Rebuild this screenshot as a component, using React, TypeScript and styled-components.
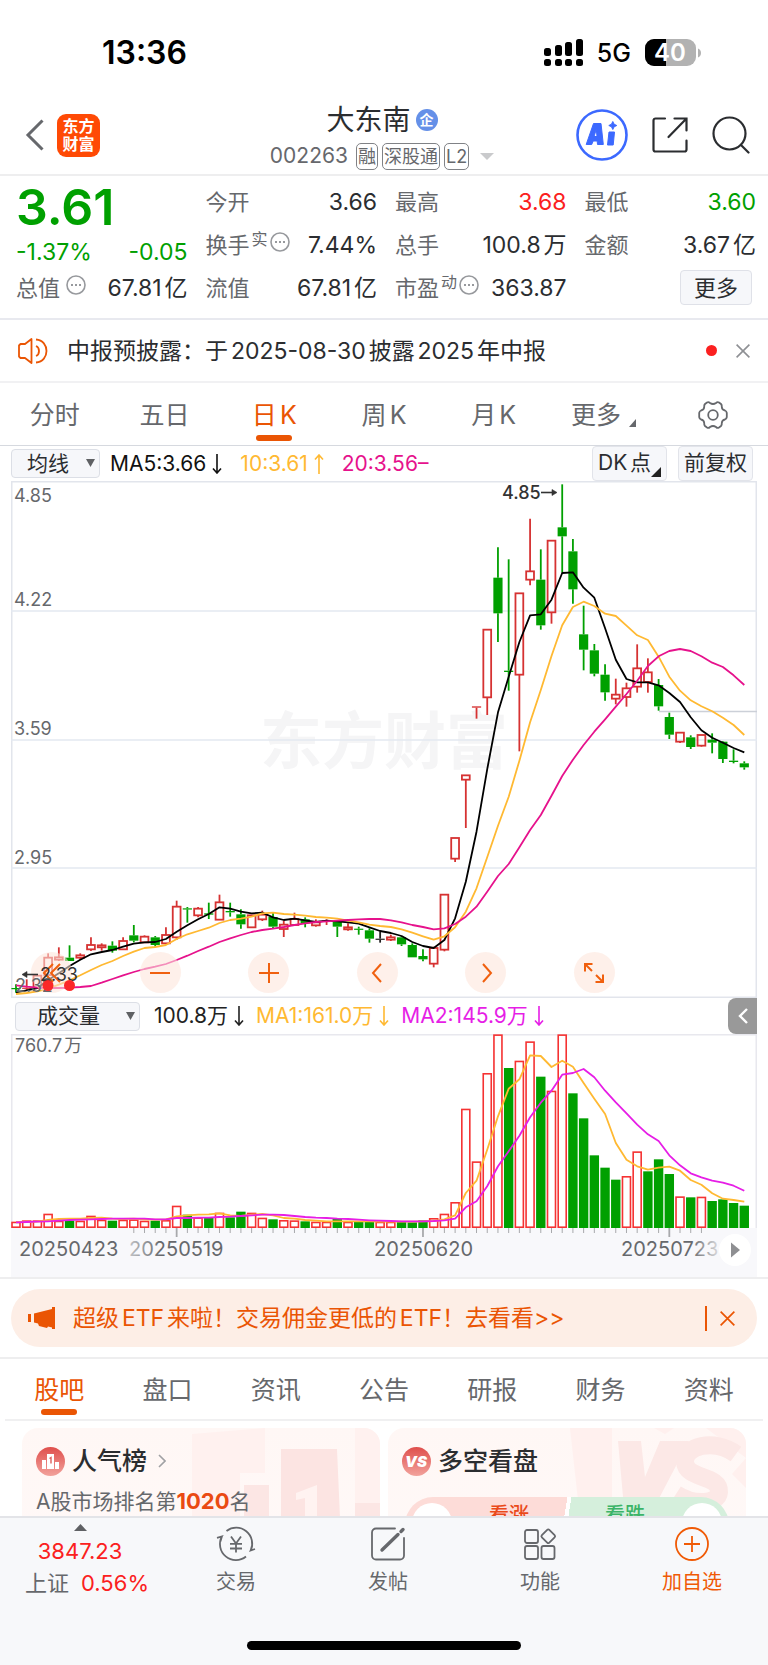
import React from "react";
import styled, { createGlobalStyle } from "styled-components";

const color = {
  text: "#2b2d30",
  label: "#66686c",
  orange: "#ea5504",
  gold: "#ffb932",
  pink: "#e6128c",
  violet: "#e61ee6",
  green: "#00a000",
  red: "#fb2020",
  candle: "#d63232",
  line: "#e4e6ec",
  panel: "#f6f7fa",
};

const GlobalStyle = createGlobalStyle`
  * { box-sizing: border-box; }
  body {
    margin: 0;
    background: #fff;
    color: ${color.text};
    font-family: Inter, "Noto Sans CJK SC", sans-serif;
    text-autospace: normal;
  }
  button, select {
    font: inherit;
    color: inherit;
    border: 0;
    padding: 0;
    margin: 0;
    background: none;
    cursor: pointer;
  }
  a { color: inherit; text-decoration: none; }
  svg { display: block; }
  svg text { font-family: Inter, "Noto Sans CJK SC", sans-serif; }
`;

const Page = styled.div`
  display: flex;
  flex-direction: column;
  height: 100vh;
  overflow: hidden;
`;

/* ---------- status bar ---------- */

const StatusBar = styled.div`
  display: flex;
  align-items: center;
  justify-content: space-between;
  flex: none;
  height: 96px;
  padding: 9px 66px 0 102px;
`;

const Clock = styled.time`
  font-size: 32px;
  font-weight: 600;
  line-height: 40px;
  color: #000;
`;

const StatusIcons = styled.div`
  display: flex;
  align-items: center;
  gap: 14px;
  color: #000;
  font-size: 25px;
  font-weight: 500;
  line-height: 28px;
`;

/* ---------- header ---------- */

const Header = styled.header`
  display: grid;
  grid-template-columns: 1fr auto 1fr;
  align-items: center;
  flex: none;
  height: 80px;
  padding: 0 18px 0 14px;
  border-bottom: 2px solid #eeeeef;
`;

const HeaderSide = styled.div<{ $end?: boolean }>`
  display: flex;
  align-items: center;
  justify-content: ${(p) => (p.$end ? "flex-end" : "flex-start")};
  gap: ${(p) => (p.$end ? 24 : 12)}px;
  padding-left: ${(p) => (p.$end ? 0 : 10)}px;
`;

const IconButton = styled.button`
  display: flex;
  align-items: center;
  justify-content: center;
`;

const BrandLink = styled.a`
  display: flex;
  flex-direction: column;
  align-items: center;
  justify-content: center;
  width: 43px;
  height: 43px;
  border-radius: 9px;
  background: #ff4a05;
  color: #fff;
  font-size: 16px;
  font-weight: 700;
  line-height: 18px;
`;

const TitleBlock = styled.div`
  display: flex;
  flex-direction: column;
  align-items: center;
  padding-top: 6px;
`;

const StockName = styled.h1`
  display: flex;
  align-items: center;
  gap: 5px;
  margin: 0;
  font-size: 28px;
  font-weight: 400;
  line-height: 36px;
`;

const CompanyBadge = styled.span`
  width: 22px;
  height: 22px;
  border-radius: 50%;
  background: #6590e8;
  color: #fff;
  font-size: 14px;
  font-weight: 700;
  line-height: 22px;
  text-align: center;
`;

const CodeRow = styled.div`
  display: flex;
  align-items: center;
  gap: 4px;
  color: ${color.label};
  font-size: 21px;
  line-height: 36px;
`;

const Code = styled.span`
  margin-right: 4px;
`;

const Tag = styled.span`
  height: 27px;
  padding: 0 1px;
  border: 1px solid #808286;
  border-radius: 5px;
  font-size: 18px;
  line-height: 25px;
`;

const CodeMenu = styled.button`
  display: flex;
  padding-left: 7px;
`;

/* ---------- quote ---------- */

const Quote = styled.section`
  display: grid;
  grid-template-columns: repeat(4, 1fr);
  gap: 0 18px;
  flex: none;
  height: 144px;
  padding: 4px 12px 8px 16px;
  border-bottom: 2px solid #e8e9ef;
`;

const QuoteColumn = styled.div`
  display: flex;
  flex-direction: column;
`;

const QuoteRow = styled.div<{ $tone?: string }>`
  display: flex;
  align-items: center;
  justify-content: space-between;
  height: 43px;
  font-size: 23px;
  line-height: 30px;
  color: ${(p) => p.$tone ?? color.text};
  white-space: nowrap;
`;

const Price = styled.strong`
  height: 58px;
  font-size: 50px;
  font-weight: 600;
  line-height: 54px;
  color: ${color.green};
`;

const Change = styled(QuoteRow)`
  height: 28px;
`;

const QuoteLabel = styled.span`
  display: flex;
  align-items: center;
  color: ${color.label};
  font-size: 22px;
`;

const QuoteSup = styled.small`
  align-self: flex-start;
  margin-left: 2px;
  font-size: 16px;
  line-height: 18px;
`;

const HintButton = styled.button<{ $gap?: boolean }>`
  display: flex;
  align-self: flex-start;
  margin: 2px 0 0 ${(p) => (p.$gap ? 6 : 2)}px;
`;

const MoreButton = styled.button`
  width: 72px;
  height: 35px;
  margin: 0 4px 0 auto;
  border: 1px solid #dfe1e8;
  border-radius: 4px;
  background: ${color.panel};
  font-size: 22px;
`;

/* ---------- notice ---------- */

const Notice = styled.section`
  display: flex;
  align-items: center;
  flex: none;
  height: 63px;
  padding: 0 18px;
  border-bottom: 2px solid #f1f1f3;
  font-size: 23px;
  line-height: 32px;
`;

const NoticeText = styled.a`
  flex: 1;
  padding-left: 19px;
`;

const UnreadDot = styled.i`
  width: 11px;
  height: 11px;
  margin-right: 19px;
  border-radius: 50%;
  background: ${color.red};
`;

/* ---------- tabs ---------- */

const TabBar = styled.nav<{ $inset?: boolean }>`
  display: grid;
  grid-template-columns: repeat(7, 1fr);
  flex: none;
  height: ${(p) => (p.$inset ? 62 : 63)}px;
  margin: ${(p) => (p.$inset ? "0 5px" : "0")};
  border-bottom: ${(p) => (p.$inset ? "2px solid #f0f0f1" : "1px solid #d6d9df")};
`;

const Tab = styled.button<{ $active?: boolean }>`
  display: flex;
  align-items: center;
  justify-content: center;
  gap: 8px;
  position: relative;
  padding-top: 2px;
  font-size: 25px;
  line-height: 36px;
  color: ${(p) => (p.$active ? color.orange : color.label)};
  &::after {
    content: "";
    display: ${(p) => (p.$active ? "block" : "none")};
    position: absolute;
    bottom: 4px;
    left: 50%;
    width: 36px;
    height: 6px;
    margin-left: -18px;
    border-radius: 3px;
    background: ${color.orange};
  }
`;

const TabCorner = styled.svg`
  align-self: flex-end;
  margin-bottom: 18px;
`;

/* ---------- chart ---------- */

const ChartSection = styled.section`
  flex: none;
  padding: 0 11px;
`;

const IndicatorRow = styled.div<{ $volume?: boolean }>`
  display: flex;
  align-items: center;
  gap: ${(p) => (p.$volume ? 12 : 18)}px;
  height: ${(p) => (p.$volume ? 36 : 35)}px;
  padding-left: ${(p) => (p.$volume ? 4 : 0)}px;
  font-size: 21px;
  line-height: 30px;
  white-space: nowrap;
  text-autospace: ${(p) => (p.$volume ? "no-autospace" : "normal")};
`;

const PickerBox = styled.label<{ $wide?: boolean }>`
  position: relative;
  display: flex;
  align-items: center;
  margin-right: ${(p) => (p.$wide ? 2 : -8)}px;
`;

const Picker = styled.select<{ $wide?: boolean }>`
  appearance: none;
  width: ${(p) => (p.$wide ? 125 : 89)}px;
  height: 29px;
  padding-left: ${(p) => (p.$wide ? 21 : 15)}px;
  border: 1px solid #dcdfe6;
  border-radius: 4px;
  background: ${color.panel};
  line-height: 26px;
`;

const PickerArrow = styled.svg`
  position: absolute;
  right: 5px;
  top: 10px;
  pointer-events: none;
`;

const Reading = styled.span<{ $tone: string }>`
  display: flex;
  align-items: center;
  gap: 6px;
  color: ${(p) => p.$tone};
`;

const ToolButtons = styled.div`
  display: flex;
  gap: 11px;
  margin: 0 4px 0 auto;
`;

const ToolButton = styled.button`
  position: relative;
  width: 75px;
  height: 35px;
  border: 1px solid #e2e4ea;
  border-radius: 4px;
  background: ${color.panel};
  text-align: left;
  padding: 0 0 2px 5px;
`;

const ToolCorner = styled.svg`
  position: absolute;
  right: 5px;
  bottom: 3px;
`;

const CollapseButton = styled.button`
  display: flex;
  align-items: center;
  justify-content: center;
  width: 29px;
  height: 36px;
  margin-left: auto;
  border-radius: 8px 0 0 8px;
  background: #999;
`;

const PlotBox = styled.div`
  position: relative;
`;

const Plot = styled.svg`
  width: 100%;
  height: auto;
`;

const PlotOverlay = styled(Plot)`
  position: absolute;
  inset: 0;
  pointer-events: none;
`;

const PlotControls = styled.div`
  position: absolute;
  left: 20px;
  right: 142px;
  bottom: 5px;
  display: flex;
  justify-content: space-between;
`;

const RoundButton = styled.button`
  display: flex;
  align-items: center;
  justify-content: center;
  width: 41px;
  height: 41px;
  border-radius: 50%;
  background: rgba(253, 230, 219, 0.58);
`;

/* ---------- banner ---------- */

const BannerWrap = styled.section`
  flex: none;
  padding: 10px 11px;
  border-top: 2px solid #eeeeef;
  border-bottom: 2px solid #eeeeef;
`;

const Banner = styled.div`
  display: flex;
  align-items: center;
  height: 58px;
  padding: 0 22px 0 17px;
  border-radius: 29px;
  background: #fdeee6;
  color: ${color.orange};
  font-size: 23px;
  line-height: 32px;
`;

const BannerText = styled.a`
  flex: 1;
  padding-left: 17px;
`;

const BannerClose = styled.button`
  display: flex;
  padding: 5px 0 5px 13px;
  border-left: 2px solid ${color.orange};
`;

/* ---------- cards ---------- */

const Cards = styled.section`
  display: grid;
  grid-template-columns: 1fr 1fr;
  grid-auto-rows: 150px;
  gap: 8px;
  flex: 1;
  min-height: 0;
  overflow: hidden;
  padding: 7px 22px 0;
`;

const Card = styled.article`
  position: relative;
  overflow: hidden;
  padding: 17px 14px;
  border-radius: 16px;
  background: linear-gradient(180deg, #fff7f5, #fff9f8);
`;

const CardArt = styled.svg`
  position: absolute;
  top: 0;
  right: 0;
`;

const CardTitle = styled.h2`
  display: flex;
  align-items: center;
  gap: 7px;
  position: relative;
  margin: 0;
  font-size: 25px;
  font-weight: 500;
  line-height: 32px;
`;

const CardText = styled.p`
  position: relative;
  margin: 8px 0 0;
  color: ${color.label};
  font-size: 21px;
  line-height: 32px;
  text-autospace: no-autospace;
`;

const Rank = styled.b`
  color: #ea4a12;
  font-size: 22px;
  font-weight: 700;
`;

const Poll = styled.div`
  position: relative;
  display: grid;
  grid-template-columns: 1fr 1fr;
  gap: 4px;
  height: 56px;
  margin: 20px 3px 0;
  border-radius: 28px;
  overflow: hidden;
  background: linear-gradient(
    99deg,
    #fddcd8 calc(50% - 4px),
    #fff calc(50% - 4px),
    #fff 50%,
    #d5efdc 50%
  );
`;

const PollSide = styled.button<{ $bull?: boolean }>`
  display: flex;
  align-items: flex-start;
  flex-direction: ${(p) => (p.$bull ? "row" : "row-reverse")};
  justify-content: flex-start;
  gap: 37px;
  padding: 6px 7px;
  color: ${(p) => (p.$bull ? "#ea4a1a" : "#3cb468")};
  font-size: 20px;
  font-weight: 500;
  line-height: 24px;
`;

const PollKnob = styled.i`
  width: 40px;
  height: 40px;
  border-radius: 50%;
  background: #fff;
`;

/* ---------- bottom bar ---------- */

const BottomBar = styled.footer`
  flex: none;
  height: 149px;
  border-top: 2px solid #e3e4e8;
  background: #f7f8fa;
`;

const BottomNav = styled.nav`
  display: grid;
  grid-template-columns: 160fr repeat(4, 152fr);
`;

const IndexButton = styled.button`
  display: flex;
  flex-direction: column;
  align-items: center;
  padding-top: 6px;
  color: ${color.red};
  font-size: 22px;
  line-height: 32px;
`;

const IndexValue = styled.span`
  margin-top: 4px;
`;

const IndexLine = styled.span`
  display: flex;
  gap: 12px;
  padding-left: 14px;
`;

const IndexName = styled.span`
  color: ${color.label};
`;

const NavItem = styled.button<{ $accent?: boolean }>`
  display: flex;
  flex-direction: column;
  align-items: center;
  gap: 6px;
  padding-top: 8px;
  color: ${(p) => (p.$accent ? "#f05a05" : color.label)};
  font-size: 20px;
  line-height: 28px;
`;

const HomeIndicator = styled.div`
  width: 274px;
  height: 9px;
  margin: 42px auto 0;
  border-radius: 5px;
  background: #000;
`;

/* ---------- chart data ---------- */

type Kind = "r" | "g" | "k";
type Candle = [Kind, number, number, number, number];

const STEP = 10.71;
const FIRST = 5;
const cx = (i: number) => FIRST + i * STEP;

// Values are stored in thirds of a chart unit, measured from a base level.
const level = (base: number, values: number[]) => values.map((v) => (v + base) / 3);
const candlesAt = (base: number, rows: Candle[]): Candle[] =>
  rows.map(([k, h, t, b, l]) => [k, (h + base) / 3, (t + base) / 3, (b + base) / 3, (l + base) / 3]);

const candles: Candle[] = [
  ...candlesAt(1137, [
    ["g", 373, 384, 387, 398], ["r", 358, 383, 386, 390], ["r", 345, 347, 383, 385], ["r", 280, 293, 345, 372],
    ["r", 262, 292, 299, 303], ["g", 256, 293, 303, 303], ["r", 280, 286, 293, 300], ["r", 232, 255, 268, 273],
    ["r", 250, 256, 262, 272], ["g", 244, 257, 272, 278], ["r", 232, 243, 268, 268], ["g", 195, 226, 242, 247],
    ["r", 226, 230, 247, 247], ["g", 228, 232, 255, 260], ["r", 202, 225, 250, 250], ["r", 122, 140, 232, 240],
    ["g", 141, 145, 148, 188], ["r", 141, 146, 166, 172], ["g", 128, 160, 164, 177], ["r", 104, 127, 179, 180],
    ["g", 128, 153, 157, 170], ["g", 148, 163, 193, 206], ["r", 165, 166, 202, 202], ["r", 152, 164, 178, 183],
    ["g", 158, 171, 200, 205], ["r", 182, 194, 207, 231], ["r", 158, 177, 195, 195], ["g", 172, 178, 190, 202],
    ["r", 178, 187, 196, 200], ["r", 178, 181, 184, 195], ["g", 180, 183, 200, 231], ["r", 190, 202, 208, 212],
    ["g", 200, 206, 209, 224], ["g", 205, 211, 236, 248], ["k", 214, 236, 239, 248], ["r", 224, 232, 239, 243],
    ["g", 228, 232, 253, 258],
  ]),
  ...candlesAt(837, [
    ["g", 550, 555, 592, 592], ["g", 568, 588, 598, 604], ["r", 560, 564, 611, 622], ["r", 403, 404, 569, 574],
    ["r", 234, 234, 296, 306], ["r", 46, 46, 59, 204],
  ]),
  ...candlesAt(-33, [
    ["r", 709, 709, 713, 746], ["r", 479, 479, 682, 735], ["g", 232, 323, 430, 516], ["g", 268, 602, 606, 662],
    ["r", 370, 370, 614, 844], ["r", 146, 304, 329, 346], ["g", 238, 329, 466, 479], ["r", 212, 212, 427, 461],
    ["g", 43, 172, 199, 308], ["g", 207, 244, 358, 401], ["g", 407, 493, 539, 601], ["g", 522, 541, 611, 619],
    ["g", 583, 614, 667, 692], ["r", 626, 674, 686, 703], ["r", 638, 655, 681, 710], ["r", 523, 595, 650, 668],
    ["r", 565, 607, 636, 668], ["g", 627, 645, 709, 722], ["g", 728, 741, 794, 807], ["r", 788, 788, 815, 819],
    ["g", 796, 802, 831, 837], ["r", 795, 795, 827, 830], ["g", 790, 809, 818, 850], ["g", 813, 815, 867, 879],
    ["g", 838, 872, 876, 880], ["g", 874, 880, 892, 899],
  ]),
];

const ma5 = [
  ...level(1137, [397, 391, 384, 360, 340, 318, 299, 283, 276, 270, 260, 251, 247, 246, 237, 215, 196, 178, 162, 142,
    146, 155, 160, 158, 172, 180, 176, 181, 186, 182, 184, 187, 191, 202, 213, 219, 228]),
  ...level(837, [546, 558, 564, 540, 475, 365, 215]),
  ...level(-33, [898, 727, 620, 516, 436, 433, 389, 309, 307, 353, 383, 475, 569, 627, 637, 637, 646, 669, 696, 742,
    781, 803, 818, 834, 847]),
];

const ma10 = [
  ...level(1137, [402, 399, 394, 386, 374, 361, 346, 330, 315, 303, 288, 275, 264, 261, 255, 237, 223, 213, 203, 189,
    180, 176, 170, 160, 158, 162, 164, 167, 171, 173, 176, 182, 187, 194, 198, 201, 208]),
  ...level(837, [518, 529, 539, 529, 502, 455, 385, 292, 197, 110]),
  ...level(-33, [872, 757, 660, 558, 466, 411, 395, 408, 431, 438, 467, 496, 510, 560, 620, 662, 691, 709, 724, 743,
    765, 795]),
];

const ma20 = [
  ...level(1137, [376, 380, 383, 384, 384, 383, 381, 378, 368, 357, 346, 336, 327, 320, 312, 300, 287, 273, 260, 246,
    235, 225, 216, 210, 206, 201, 195, 190, 186, 184, 182, 180, 178, 177, 177, 181, 187]),
  ...level(837, [495, 501, 508, 505, 492, 470, 440, 395, 348, 312, 262, 210, 165, 107, 48]),
  ...level(-33, [869, 825, 785, 748, 710, 672, 632, 588, 559, 543, 537, 543, 559, 578, 591, 616, 645]),
];

const volumes = [
  19, 23, 23, 43, 22, 22, 22, 37, 25, 22, 25, 26, 22, 22, 24, 67, 40, 32, 30, 46, 32, 49, 46, 31, 26, 24, 23, 20, 19,
  19, 27, 19, 20, 21, 19, 19, 19, 17, 23, 30, 43, 78, 358, 200, 465, 581, 480, 502, 560, 454, 412, 581, 404, 329, 218,
  181, 145, 156, 230, 170, 206, 162, 95, 92, 94, 81, 86, 75, 67,
];
const volumeKinds = "rrrrrgrrrgrrrgrrgrgrggrrgrrgrrgrggrrggg" + "rrrrrrrgrrgrrggggg" + "rrgggrgrgggg";

const volumeMa1 = [
  18, 18, 19, 24, 27, 28, 28, 30, 31, 28, 27, 28, 26, 25, 26, 35, 38, 40, 41, 44, 38, 36, 40, 42, 38, 30, 28, 24, 22,
  20, 20, 20, 20, 20, 19, 19, 19, 19, 20, 21, 26, 38, 105, 142, 235, 335, 418, 446, 518, 516, 483, 502, 484, 435, 388,
  342, 255, 205, 185, 175, 181, 184, 172, 144, 130, 104, 88, 84, 79,
];
const volumeMa2 = [
  17, 18, 19, 20, 22, 24, 25, 26, 27, 28, 28, 28, 28, 26, 26, 30, 30, 31, 31, 33, 34, 36, 38, 40, 40, 39, 36, 33, 31,
  30, 28, 27, 25, 23, 22, 21, 20, 20, 20, 21, 23, 28, 62, 80, 125, 185, 230, 277, 332, 376, 412, 460, 465, 477, 452,
  412, 377, 344, 310, 281, 261, 218, 188, 164, 152, 142, 136, 127, 112,
];

const points = (values: number[]) => values.map((v, i) => `${cx(i).toFixed(1)},${v.toFixed(1)}`).join(" ");

const VOLUME_BASE = 194;
const fromBase = (values: number[]) => values.map((v) => VOLUME_BASE - v / 3);

/* ---------- small drawings ---------- */

const HintIcon = () => (
  <svg width="20" height="20" viewBox="0 0 20 20" fill="none" stroke="#97999d" strokeWidth="1.6">
    <circle cx="10" cy="10" r="9" />
    <path d="M5 10h2M9 10h2M13 10h2" strokeWidth="2" />
  </svg>
);

const Cross = ({ size, stroke }: { size: number; stroke: string }) => (
  <svg width={size} height={size} viewBox="0 0 14 14" fill="none" stroke={stroke} strokeWidth="1.6">
    <path d="M.6.6l12.8 12.8M13.4.6L.6 13.4" />
  </svg>
);

const Arrow = ({ up }: { up?: boolean }) => (
  <svg width="10" height="20" viewBox="0 0 10 20" fill="none" stroke="currentColor" strokeWidth="1.6">
    <path d={up ? "M5 20V1M1 5.500L5 1l4 4.500" : "M5 0v19M1 14.500L5 19l4-4.500"} />
  </svg>
);

const Caret = () => (
  <PickerArrow width="9" height="8" viewBox="0 0 9 8">
    <path d="M0 0h9L4.500 8z" fill="#5f6164" />
  </PickerArrow>
);

const CandleMark = ({ candle, index }: { candle: Candle; index: number }) => {
  const [kind, high, top, bottom, low] = candle;
  const x = cx(index);
  const stroke = kind === "r" ? color.candle : kind === "g" ? color.green : "#222";
  const height = bottom - top;
  const hollow = kind === "r" && height > 1.5;
  return (
    <g stroke={stroke} strokeWidth="1.8">
      {high < top && <path d={`M${x} ${high}V${top}`} />}
      {low > bottom && <path d={`M${x} ${bottom}V${low}`} />}
      {hollow ? (
        <rect x={x - 3.9} y={top} width="7.8" height={height} fill="none" />
      ) : (
        <rect x={x - 4.6} y={top} width="9.2" height={Math.max(height, 1.2)} fill={stroke} stroke="none" />
      )}
    </g>
  );
};

const PriceChart = () => (
  <Plot viewBox="0 0 746 517" role="img" aria-label="日K">
    <g fill="#f5f5f6">
      <text x="249" y="283" fontSize="62" fontWeight="700">东方财富</text>
    </g>
    <g stroke="#e2e5ec" strokeWidth="1.5" fill="none">
      <rect x=".75" y=".75" width="744.500" height="515.500" />
      <path d="M0 130h746M0 259h746M0 387h746" stroke="#e4e9f1" />
      <path d="M648 230.500h98" stroke="#ccd0d8" />
    </g>
    {candles.map((c, i) => (
      <CandleMark key={i} candle={c} index={i} />
    ))}
    <g fill="none" strokeWidth="1.8" strokeLinejoin="round">
      <polyline points={points(ma5)} stroke="#000" />
      <polyline points={points(ma10)} stroke={color.gold} />
      <polyline points={points(ma20)} stroke={color.pink} />
    </g>
    <g fill={color.label} fontSize="18">
      <text x="3" y="21">4.85</text>
      <text x="3" y="125">4.22</text>
      <text x="3" y="254">3.59</text>
      <text x="3" y="383">2.95</text>
    </g>
    <text x="491" y="18" fill="#333" fontSize="18" fontWeight="500">4.85</text>
    <g stroke="#333" strokeWidth="1.6" fill="#333">
      <path d="M530 11.500h13" />
      <path d="M541 8.500l5 3-5 3z" strokeWidth=".6" />
    </g>
  </Plot>
);

const PriceMarks = () => (
  <PlotOverlay viewBox="0 0 746 517">
    <text x="4" y="511" fill={color.label} fontSize="18">2.32</text>
    <text x="29" y="500" fill="#333" fontSize="18">2.33</text>
    <g stroke="#333" strokeWidth="1.6" fill="#333">
      <path d="M14 493.500h13" />
      <path d="M16 490.500l-5 3 5 3z" strokeWidth=".6" />
    </g>
    <circle cx="37" cy="504.500" r="5.500" fill="#fb2828" />
    <circle cx="58.500" cy="504.500" r="5.500" fill="#fb2828" />
  </PlotOverlay>
);

const VolumeChart = () => (
  <Plot viewBox="0 0 746 243" role="img" aria-label="成交量">
    <defs>
      <linearGradient id="fadeIn" gradientUnits="userSpaceOnUse" x1="112" y1="0" x2="150" y2="0">
        <stop offset="0" stopColor={color.label} stopOpacity=".25" />
        <stop offset="1" stopColor={color.label} />
      </linearGradient>
      <linearGradient id="fadeOut" gradientUnits="userSpaceOnUse" x1="680" y1="0" x2="706" y2="0">
        <stop offset="0" stopColor={color.label} />
        <stop offset="1" stopColor={color.label} stopOpacity=".25" />
      </linearGradient>
    </defs>
    <rect y="194" width="746" height="49" fill="#f8f8fb" />
    <path d="M.75 194V.75h744.500V194" fill="none" stroke="#e8e8ee" strokeWidth="1.500" />
    {volumes.map((v, i) =>
      volumeKinds[i] === "r" ? (
        <rect key={i} x={cx(i) - 4} y={VOLUME_BASE - v / 3 + 0.8} width="8" height={v / 3 - 1.6} fill="none"
          stroke="#f53232" strokeWidth="1.6" />
      ) : (
        <rect key={i} x={cx(i) - 4.7} y={VOLUME_BASE - v / 3} width="9.400" height={v / 3} fill={color.green} />
      )
    )}
    <g fill="none" strokeWidth="1.8" strokeLinejoin="round">
      <polyline points={points(fromBase(volumeMa1))} stroke={color.gold} />
      <polyline points={points(fromBase(volumeMa2))} stroke={color.violet} />
    </g>
    <g stroke="#a8a9ac">
      {volumes.map((_, i) => {
        const major = i === 15 || i === 38 || i === 61;
        if (i < 11 || i > 64) return null;
        return <path key={i} d={`M${cx(i)} 194v${major ? 9 : 5}`} strokeWidth={major ? 1.8 : 1} />;
      })}
    </g>
    <text x="4" y="18" fontSize="18" fill={color.label}>760.7万</text>
    <g fontSize="20" fill={color.label}>
      <text x="8" y="222">20250423</text>
      <text x="118" y="222" fill="url(#fadeIn)">20250519</text>
      <text x="363" y="222">20250620</text>
      <text x="610" y="222" fill="url(#fadeOut)">20250723</text>
    </g>
    <circle cx="724" cy="216" r="16" fill="#fff" />
    <path d="M720 208.500l9 7.500-9 7.500z" fill="#8e8f92" />
  </Plot>
);

/* ---------- page ---------- */

const chartTabs = ["分时", "五日", "日K", "周K", "月K", "更多"];
const infoTabs = ["股吧", "盘口", "资讯", "公告", "研报", "财务", "资料"];

const controls: { name: string; path: string }[] = [
  { name: "最早", path: "M13 3L4 12l9 9M20 3l-9 9 9 9" },
  { name: "缩小", path: "M2 12h20" },
  { name: "放大", path: "M2 12h20M12 2v20" },
  { name: "向左", path: "M16 3l-8 9 8 9" },
  { name: "向右", path: "M9 3l8 9-8 9" },
  { name: "全屏", path: "M3 10.500V3h7.500M3 3l7 7M21 13.500V21h-7.500M21 21l-7-7" },
];

export default function App() {
  return (
    <Page>
      <GlobalStyle />
      <StatusBar>
        <Clock>13:36</Clock>
        <StatusIcons>
          <svg width="39" height="28" viewBox="0 0 39 28" fill="#000">
            <rect x="0" y="9" width="7" height="8" rx="2.500" />
            <rect x="11" y="6" width="7" height="11" rx="2.500" />
            <rect x="21" y="3" width="7" height="14" rx="2.500" />
            <rect x="32" y="0" width="7" height="17" rx="2.500" />
            <rect x="0" y="20" width="7" height="7" rx="2.500" />
            <rect x="11" y="20" width="7" height="7" rx="2.500" />
            <rect x="21" y="20" width="7" height="7" rx="2.500" />
            <rect x="32" y="20" width="7" height="7" rx="2.500" />
          </svg>
          <span>5G</span>
          <svg width="57" height="28" viewBox="0 0 57 28">
            <defs>
              <clipPath id="batteryShape">
                <rect width="51" height="27" rx="9" />
              </clipPath>
            </defs>
            <g clipPath="url(#batteryShape)">
              <rect width="51" height="27" fill="#b2b2b2" />
              <rect width="21" height="27" fill="#000" />
            </g>
            <path d="M53 9.500c4 1.500 4 7.500 0 9z" fill="#b2b2b2" />
            <text x="25" y="22" fontSize="24" fontWeight="600" fill="#fff" textAnchor="middle">40</text>
          </svg>
        </StatusIcons>
      </StatusBar>

      <Header>
        <HeaderSide>
          <IconButton aria-label="返回">
            <svg width="21" height="32" viewBox="0 0 21 32" fill="none" stroke="#66686c" strokeWidth="3">
              <path d="M18.500 1.500L4 16l14.500 14.500" />
            </svg>
          </IconButton>
          <BrandLink href="#home">
            <span>东方</span>
            <span>财富</span>
          </BrandLink>
        </HeaderSide>
        <TitleBlock>
          <StockName>
            大东南<CompanyBadge>企</CompanyBadge>
          </StockName>
          <CodeRow>
            <Code>002263</Code>
            <Tag>融</Tag>
            <Tag>深股通</Tag>
            <Tag>L2</Tag>
            <CodeMenu aria-label="切换股票">
              <svg width="14" height="7" viewBox="0 0 14 7">
                <path d="M0 0h14L7 7z" fill="#c9cacc" />
              </svg>
            </CodeMenu>
          </CodeRow>
        </TitleBlock>
        <HeaderSide $end>
          <IconButton aria-label="智能助手">
            <svg width="52" height="52" viewBox="0 0 52 52">
              <circle cx="26" cy="26" r="24.500" fill="none" stroke="#3c69ff" strokeWidth="2.600" />
              <g fill="#3c69ff" stroke="#3c69ff" strokeWidth="1" strokeLinejoin="round">
                <path fillRule="evenodd" d="M17.500 14.500h7.500l2.300 21h-5.800l-.3-3.500h-4l-1.500 3.500h-5.500zM20.300 20.500l-2.300 7h3z" />
                <path d="M33 23h5.500l-1.300 13h-5.700z" />
                <path d="M36.800 12.500l1.300 2.700 2.700 1.300-2.700 1.300-1.300 2.700-1.300-2.700-2.700-1.300 2.700-1.300z" />
              </g>
            </svg>
          </IconButton>
          <IconButton aria-label="分享">
            <svg width="36" height="36" viewBox="0 0 36 36" fill="none" stroke="#2b2d30" strokeWidth="2.200" strokeLinecap="round">
              <path d="M13 1.500H3.500a2 2 0 0 0-2 2v29a2 2 0 0 0 2 2h29a2 2 0 0 0 2-2V23.500" />
              <path d="M22.500 1.500h12v12M34 2L16.500 20" />
            </svg>
          </IconButton>
          <IconButton aria-label="搜索">
            <svg width="38" height="38" viewBox="0 0 38 38" fill="none" stroke="#2b2d30" strokeWidth="2.200" strokeLinecap="round">
              <circle cx="17.500" cy="17.500" r="16" />
              <path d="M29 29l7.500 7.500" />
            </svg>
          </IconButton>
        </HeaderSide>
      </Header>

      <Quote>
        <QuoteColumn>
          <Price>3.61</Price>
          <Change $tone={color.green}>
            <span>-1.37%</span>
            <span>-0.05</span>
          </Change>
          <QuoteRow>
            <QuoteLabel>
              总值
              <HintButton $gap aria-label="总值说明"><HintIcon /></HintButton>
            </QuoteLabel>
            <span>67.81亿</span>
          </QuoteRow>
        </QuoteColumn>
        <QuoteColumn>
          <QuoteRow>
            <QuoteLabel>今开</QuoteLabel>
            <span>3.66</span>
          </QuoteRow>
          <QuoteRow>
            <QuoteLabel>
              换手<QuoteSup>实</QuoteSup>
              <HintButton aria-label="换手说明"><HintIcon /></HintButton>
            </QuoteLabel>
            <span>7.44%</span>
          </QuoteRow>
          <QuoteRow>
            <QuoteLabel>流值</QuoteLabel>
            <span>67.81亿</span>
          </QuoteRow>
        </QuoteColumn>
        <QuoteColumn>
          <QuoteRow $tone={color.red}>
            <QuoteLabel>最高</QuoteLabel>
            <span>3.68</span>
          </QuoteRow>
          <QuoteRow>
            <QuoteLabel>总手</QuoteLabel>
            <span>100.8万</span>
          </QuoteRow>
          <QuoteRow>
            <QuoteLabel>
              市盈<QuoteSup>动</QuoteSup>
              <HintButton aria-label="市盈说明"><HintIcon /></HintButton>
            </QuoteLabel>
            <span>363.87</span>
          </QuoteRow>
        </QuoteColumn>
        <QuoteColumn>
          <QuoteRow $tone={color.green}>
            <QuoteLabel>最低</QuoteLabel>
            <span>3.60</span>
          </QuoteRow>
          <QuoteRow>
            <QuoteLabel>金额</QuoteLabel>
            <span>3.67亿</span>
          </QuoteRow>
          <QuoteRow>
            <MoreButton>更多</MoreButton>
          </QuoteRow>
        </QuoteColumn>
      </Quote>

      <Notice>
        <svg width="30" height="26" viewBox="0 0 30 26" fill="none" stroke={color.orange} strokeWidth="1.800" strokeLinejoin="round">
          <path d="M13.500 1v24L7 20H2.500L1 18.500v-11L2.500 6H7z" />
          <path d="M18 8c4 1.500 4 8.500 0 10M18 1.500c14 1 14 22 0 23" />
        </svg>
        <NoticeText href="#notice">中报预披露：于2025-08-30披露2025年中报</NoticeText>
        <UnreadDot />
        <IconButton aria-label="关闭公告">
          <Cross size={14} stroke="#8e9094" />
        </IconButton>
      </Notice>

      <TabBar>
        {chartTabs.map((name) => (
          <Tab key={name} $active={name === "日K"}>
            {name}
            {name === "更多" && (
              <TabCorner width="7" height="8" viewBox="0 0 7 8">
                <path d="M7 0v8H0z" fill="#66686c" />
              </TabCorner>
            )}
          </Tab>
        ))}
        <Tab aria-label="设置">
          <svg width="30" height="30" viewBox="0 0 30 30" fill="none" stroke="#66686c" strokeWidth="1.800" strokeLinejoin="round">
            <path d="M9 2.500Q10.500 1.500 12 3Q15 5 18 3Q19.500 1.500 21 2.500L23 4Q24 5 23.800 7Q24 10 27 10.500Q28.500 11 28.800 13V17Q28.500 19 27 19.500Q24 20 23.800 23Q24 25 23 26L21 27.500Q19.500 28.500 18 27Q15 25 12 27Q10.500 28.500 9 27.500L7 26Q6 25 6.200 23Q6 20 3 19.500Q1.500 19 1.200 17V13Q1.500 11 3 10.500Q6 10 6.200 7Q6 5 7 4z" />
            <circle cx="15" cy="15" r="4.800" />
          </svg>
        </Tab>
      </TabBar>

      <ChartSection>
        <IndicatorRow>
          <PickerBox>
            <Picker aria-label="主图指标">
              <option>均线</option>
            </Picker>
            <Caret />
          </PickerBox>
          <Reading $tone="#111">MA5:3.66<Arrow /></Reading>
          <Reading $tone={color.gold}>10:3.61<Arrow up /></Reading>
          <Reading $tone={color.pink}>20:3.56–</Reading>
          <ToolButtons>
            <ToolButton>
              DK点
              <ToolCorner width="10" height="10" viewBox="0 0 10 10">
                <path d="M10 0v10H0z" fill="#222" />
              </ToolCorner>
            </ToolButton>
            <ToolButton>前复权</ToolButton>
          </ToolButtons>
        </IndicatorRow>
        <PlotBox>
          <PriceChart />
          <PlotControls>
            {controls.map((c) => (
              <RoundButton key={c.name} aria-label={c.name}>
                <svg width="24" height="24" viewBox="0 0 24 24" fill="none" stroke="#f0600f" strokeWidth="2">
                  <path d={c.path} />
                </svg>
              </RoundButton>
            ))}
          </PlotControls>
          <PriceMarks />
        </PlotBox>
        <IndicatorRow $volume>
          <PickerBox $wide>
            <Picker $wide aria-label="副图指标">
              <option>成交量</option>
            </Picker>
            <Caret />
          </PickerBox>
          <Reading $tone="#222">100.8万<Arrow /></Reading>
          <Reading $tone={color.gold}>MA1:161.0万<Arrow /></Reading>
          <Reading $tone={color.violet}>MA2:145.9万<Arrow /></Reading>
          <CollapseButton aria-label="收起">
            <svg width="10" height="16" viewBox="0 0 10 16" fill="none" stroke="#fff" strokeWidth="2.400">
              <path d="M9 1L2 8l7 7" />
            </svg>
          </CollapseButton>
        </IndicatorRow>
        <VolumeChart />
      </ChartSection>

      <BannerWrap>
        <Banner>
          <svg width="28" height="24" viewBox="0 0 28 24" fill={color.orange}>
            <path d="M0 8h3v8H0zM6 7.500L24 3V1h3v22h-3v-1.500l-4-1-1 1.500-8-2-1-2.500-4-1z" />
          </svg>
          <BannerText href="#etf">超级ETF来啦！交易佣金更低的ETF！去看看&gt;&gt;</BannerText>
          <BannerClose aria-label="关闭广告">
            <Cross size={15} stroke={color.orange} />
          </BannerClose>
        </Banner>
      </BannerWrap>

      <TabBar $inset>
        {infoTabs.map((name) => (
          <Tab key={name} $active={name === "股吧"}>{name}</Tab>
        ))}
      </TabBar>

      <Cards>
        <Card>
          <CardArt width="188" height="90" viewBox="0 0 188 90">
            <path d="M0 6l73-6v45h-25v45H0z" fill="#fff1ef" />
            <path d="M163 0h25v90h-25z" fill="#fff1ef" />
            <path d="M52 57h25v33H52zM163 75h25v15h-25z" fill="#fce6e4" />
            <path d="M89 21h56l3 69H89z" fill="#fce4e2" />
            <path d="M104 65l21-8v33h-12V70l-9 2z" fill="#fff3f1" />
          </CardArt>
          <CardTitle>
            <svg width="29" height="29" viewBox="0 0 29 29">
              <defs>
                <linearGradient id="badge" x1="0" y1="0" x2="0" y2="1">
                  <stop offset="0" stopColor="#df4f4c" />
                  <stop offset="1" stopColor="#f2a29c" />
                </linearGradient>
              </defs>
              <circle cx="14.500" cy="14.500" r="14.500" fill="url(#badge)" />
              <path d="M6 13h4v9H6zM11 7h7v15h-7zM19 15h4v7h-4z" fill="#fff" />
              <path d="M13.500 11.500l1.500-1v6" stroke="#df5f5b" strokeWidth="1.400" fill="none" />
            </svg>
            人气榜
            <svg width="12" height="14" viewBox="-4 0 12 14" fill="none" stroke="#a0a1a4" strokeWidth="1.600">
              <path d="M1 1l6 6-6 6" />
            </svg>
          </CardTitle>
          <CardText>A股市场排名第<Rank>1020</Rank>名</CardText>
        </Card>
        <Card>
          <CardArt width="180" height="90" viewBox="0 0 180 90">
            <path d="M4 0h42v90H14z" fill="#fff0ee" />
            <path d="M88 0h20l-9 6zM140 0h40v60l-14-14 14-16z" fill="#fff0ee" />
            <path d="M52 13h23l4 36 15-36h29L88 80H58z" fill="#fce8e6" />
            <path d="M170 26c-22-16-52-8-51 8 1 18 35 12 34 30-1 12-24 14-43 2" fill="none" stroke="#fce8e6" strokeWidth="18" />
          </CardArt>
          <CardTitle>
            <svg width="29" height="29" viewBox="0 0 29 29">
              <circle cx="14.500" cy="14.500" r="14.500" fill="url(#badge)" />
              <text x="14" y="20" fontSize="15" fontWeight="900" fontStyle="italic" fill="#fff" textAnchor="middle">VS</text>
            </svg>
            多空看盘
          </CardTitle>
          <Poll>
            <PollSide $bull>
              <PollKnob />
              看涨
            </PollSide>
            <PollSide>
              <PollKnob />
              看跌
            </PollSide>
          </Poll>
        </Card>
      </Cards>

      <BottomBar>
        <BottomNav>
          <IndexButton>
            <svg width="13" height="7" viewBox="0 0 13 7">
              <path d="M6.500 0L13 7H0z" fill="#5f6164" />
            </svg>
            <IndexValue>3847.23</IndexValue>
            <IndexLine>
              <IndexName>上证</IndexName>
              <span>0.56%</span>
            </IndexLine>
          </IndexButton>
          <NavItem>
            <svg width="40" height="36" viewBox="0 0 40 36" fill="none" stroke="currentColor" strokeWidth="1.800">
              <path d="M10.500 5A16 16 0 0 1 34.700 24.500L39 23M34.700 24.500l1.500-5" />
              <path d="M30 30.500A16 16 0 0 1 5.900 10.400L1 11.800M5.900 10.400l-1.500 5" />
              <path d="M15 10.500l5 7 5-7M14 17.800h12M14 22.500h12M20 17.500v9" />
            </svg>
            交易
          </NavItem>
          <NavItem>
            <svg width="36" height="36" viewBox="0 0 36 36" fill="none" stroke="currentColor" strokeWidth="1.800" strokeLinecap="round">
              <path d="M25 2.500H6a4 4 0 0 0-4 4v23a4 4 0 0 0 4 4h24a4 4 0 0 0 4-4V12" />
              <path d="M12 24L28 8.500M31 5.500l2-2" strokeWidth="3.400" />
            </svg>
            发帖
          </NavItem>
          <NavItem>
            <svg width="36" height="36" viewBox="0 0 36 36" fill="none" stroke="currentColor" strokeWidth="1.800">
              <rect x="3" y="4" width="13" height="13" rx="2" />
              <rect x="3" y="20" width="13" height="13" rx="2" />
              <rect x="19.500" y="20" width="13" height="13" rx="2" />
              <rect x="21" y="5" width="10.500" height="10.500" rx="1.500" transform="rotate(45 26.250 10.250)" />
            </svg>
            功能
          </NavItem>
          <NavItem $accent>
            <svg width="36" height="36" viewBox="0 0 36 36" fill="none" stroke="currentColor" strokeWidth="1.800">
              <circle cx="18" cy="18" r="16" />
              <path d="M10 18h16M18 10v16" />
            </svg>
            加自选
          </NavItem>
        </BottomNav>
        <HomeIndicator />
      </BottomBar>
    </Page>
  );
}
